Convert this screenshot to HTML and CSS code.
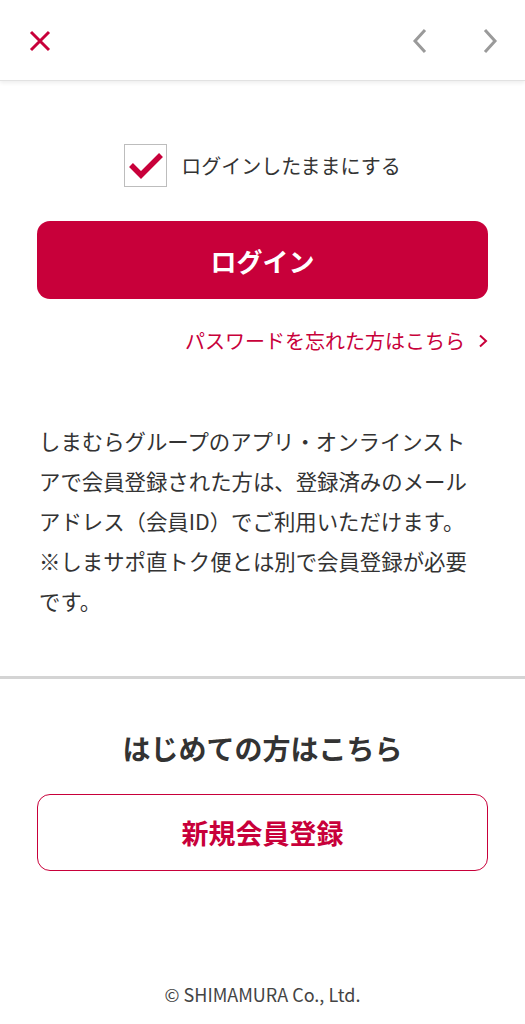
FILE: index.html
```html
<!DOCTYPE html>
<html lang="ja">
<head>
<meta charset="UTF-8">
<meta name="viewport" content="width=device-width, initial-scale=1.0">
<link rel="stylesheet" href="styles.css">
</head>
<body>

<div class="header">
  <button class="icon-btn close-btn" aria-label="閉じる">
    <svg width="22" height="22" viewBox="0 0 22 22"><path d="M2 2 L20 20 M20 2 L2 20" stroke="#c8003a" stroke-width="3" fill="none"/></svg>
  </button>
  <div class="nav">
    <button class="icon-btn" aria-label="戻る">
      <svg width="18" height="26" viewBox="0 0 18 26"><path d="M14 2 L4 13 L14 24" stroke="#9a9a9a" stroke-width="3" fill="none"/></svg>
    </button>
    <button class="icon-btn" aria-label="進む">
      <svg width="18" height="26" viewBox="0 0 18 26"><path d="M4 2 L14 13 L4 24" stroke="#9a9a9a" stroke-width="3" fill="none"/></svg>
    </button>
  </div>
</div>

<div class="main">
  <label class="keep">
    <span class="checkbox">
      <svg width="36" height="28" viewBox="0 0 36 28"><path d="M3 14 L13 24 L33 4" stroke="#c8003a" stroke-width="5.5" fill="none"/></svg>
    </span>
    <span class="keep-text">ログインしたままにする</span>
  </label>

  <button class="btn-login">ログイン</button>

  <div class="forgot">
    <a href="#">パスワードを忘れた方はこちら<span class="chev">
      <svg width="10" height="14" viewBox="0 0 10 14"><path d="M2 1.5 L8 7 L2 12.5" stroke="#c8003a" stroke-width="2" fill="none"/></svg>
    </span></a>
  </div>

  <p class="note">しまむらグループのアプリ・オンラインストアで会員登録された方は、登録済みのメールアドレス（会員ID）でご利用いただけます。※しまサポ直トク便とは別で会員登録が必要です。</p>
</div>

<div class="divider"></div>

<div class="main">
  <h2 class="first-title">はじめての方はこちら</h2>
  <button class="btn-register">新規会員登録</button>
</div>

<div class="footer">© SHIMAMURA Co., Ltd.</div>

</body>
</html>
```

FILE: styles.css
```css
body {
  margin: 0;
  font-family: "Noto Sans CJK JP", "Noto Sans", sans-serif;
  color: #333;
  background: #fff;
}
.header {
  height: 81px;
  display: flex;
  align-items: center;
  justify-content: space-between;
  padding: 1px 26px 0 29px;
  border-bottom: 1px solid #e2e2e2;
  box-shadow: 0 2px 4px rgba(0, 0, 0, 0.07);
  box-sizing: border-box;
}
.icon-btn {
  background: none;
  border: none;
  padding: 0;
  display: flex;
  align-items: center;
  cursor: pointer;
}
.nav {
  display: flex;
  gap: 52px;
}
.main {
  padding: 0 37px;
}
.keep {
  display: flex;
  justify-content: center;
  align-items: center;
  gap: 14px;
  margin-top: 63px;
}
.checkbox {
  width: 43px;
  height: 43px;
  border: 1px solid #bdbdbd;
  box-sizing: border-box;
  display: flex;
  align-items: center;
  justify-content: center;
  padding-bottom: 2px;
}
.keep-text {
  font-size: 20px;
  color: #333;
}
.btn-login {
  display: block;
  width: 100%;
  height: 78px;
  margin-top: 34px;
  border: none;
  border-radius: 13px;
  background: #c8003a;
  color: #fff;
  font-family: inherit;
  font-size: 26px;
  font-weight: bold;
  cursor: pointer;
}
.forgot {
  margin-top: 27px;
  text-align: right;
  line-height: 30px;
}
.forgot a {
  color: #c8003a;
  font-size: 20px;
  text-decoration: none;
  display: inline-flex;
  align-items: center;
}
.chev {
  display: inline-flex;
  margin-left: 13px;
}
.note {
  margin: 64px 0 0;
  padding-left: 2px;
  padding-right: 6px;
  font-size: 21.4px;
  line-height: 40px;
  color: #333;
}
.divider {
  height: 3px;
  background: #d4d4d4;
  margin-top: 55px;
}
.first-title {
  margin: 49px 0 0;
  text-align: center;
  font-size: 28px;
  line-height: 40px;
  font-weight: bold;
  color: #333;
}
.btn-register {
  display: block;
  width: 100%;
  height: 77px;
  margin-top: 26px;
  border: 1.5px solid #c8003a;
  border-radius: 13px;
  background: #fff;
  color: #c8003a;
  font-family: inherit;
  font-size: 27px;
  font-weight: bold;
  cursor: pointer;
}
.footer {
  margin-top: 111px;
  text-align: center;
  font-size: 18px;
  line-height: 24px;
  color: #444;
}
```
